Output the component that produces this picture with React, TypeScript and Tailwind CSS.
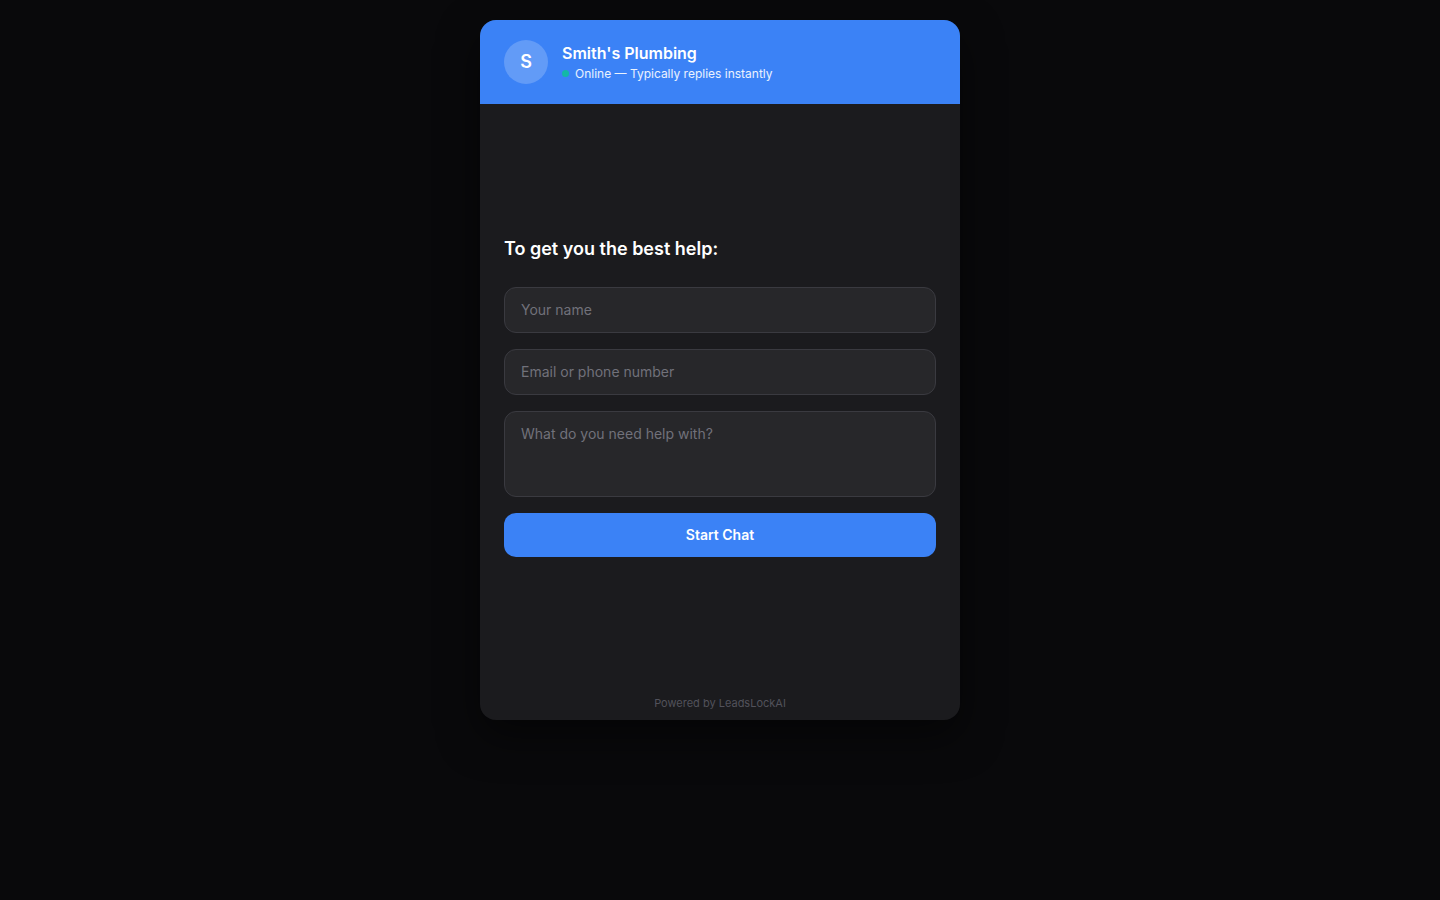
import React from "react";

export default function App() {
  return (
    <div
      className="min-h-screen w-full bg-[#09090b] flex justify-center pt-5"
      style={{ fontFamily: "Inter, 'Noto Sans', sans-serif" }}
    >
      <div className="w-[480px] h-[700px] rounded-2xl overflow-hidden bg-[#1b1b1e] flex flex-col shadow-[0_16px_40px_rgba(0,0,0,0.5)]">
        <div className="h-[84px] shrink-0 bg-[#3b82f6] flex items-center px-6 gap-3.5">
          <div className="w-11 h-11 rounded-full bg-white/20 flex items-center justify-center text-white text-lg font-semibold">
            S
          </div>
          <div className="flex flex-col">
            <div className="text-white text-base font-semibold leading-5">Smith's Plumbing</div>
            <div className="flex items-center gap-1.5 mt-[3px]">
              <span className="w-[7px] h-[7px] rounded-full bg-[#14b8a6]" />
              <span className="text-xs leading-4 text-white/90">Online — Typically replies instantly</span>
            </div>
          </div>
        </div>
        <div className="flex-1 flex flex-col justify-center px-6">
          <h2 className="text-lg leading-7 font-semibold text-white mb-6">To get you the best help:</h2>
          <div className="flex flex-col gap-4">
            <input
              placeholder="Your name"
              className="h-[46px] w-full rounded-xl border border-[#3a3a40] bg-[#27272a] px-4 text-sm text-white placeholder:text-[#71717a] outline-none"
            />
            <input
              placeholder="Email or phone number"
              className="h-[46px] w-full rounded-xl border border-[#3a3a40] bg-[#27272a] px-4 text-sm text-white placeholder:text-[#71717a] outline-none"
            />
            <textarea
              placeholder="What do you need help with?"
              className="h-[86px] w-full resize-none rounded-xl border border-[#3a3a40] bg-[#27272a] px-4 py-3 text-sm text-white placeholder:text-[#71717a] outline-none"
            />
            <button className="h-11 w-full rounded-xl bg-[#3b82f6] text-white text-sm font-semibold">
              Start Chat
            </button>
          </div>
        </div>
        <div className="shrink-0 pt-2 pb-[9px] text-center text-[11px] leading-4 text-[#52525b]">
          Powered by LeadsLockAI
        </div>
      </div>
    </div>
  );
}
